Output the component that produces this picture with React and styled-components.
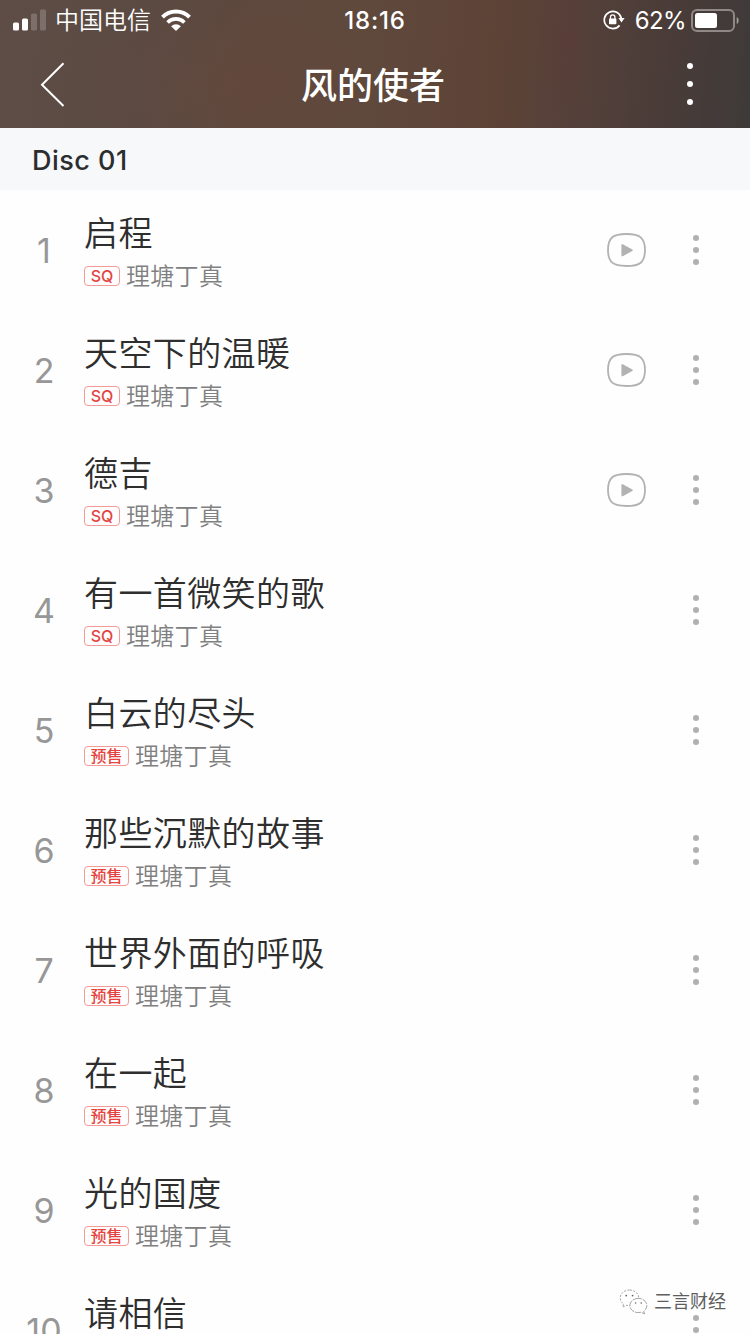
import React from 'react';
import styled, { createGlobalStyle } from 'styled-components';

const GlobalStyle = createGlobalStyle`
  * {
    box-sizing: border-box;
  }
  body {
    margin: 0;
    background: #ffffff;
    font-family: Inter, "Noto Sans CJK SC", sans-serif;
  }
  svg {
    display: block;
    flex-shrink: 0;
  }
`;

const Screen = styled.main`
  position: relative;
  width: 750px;
  height: 1334px;
  overflow: hidden;
  background: #fefefe;
`;
const Header = styled.header`
  height: 128px;
  color: #ffffff;
  background:
    radial-gradient(ellipse 150px 80px at 225px 84px, rgba(112, 70, 56, 0.18), transparent),
    radial-gradient(ellipse 30px 90px at 568px 40px, rgba(100, 50, 46, 0.18), transparent),
    linear-gradient(95deg, #5d4d46 0%, #5b4a42 20%, #5f483d 34%, #5f483c 50%, #5d4336 66%, #54403a 77%, #4a3c38 88%, #3e3a39 100%);
`;
const StatusBar = styled.div`
  display: grid;
  grid-template-columns: 1fr auto 1fr;
  align-items: center;
  height: 40px;
`;
const StatusLeft = styled.div`
  display: flex;
  align-items: center;
  padding-left: 13px;
`;
const StatusRight = styled.div`
  display: flex;
  align-items: center;
  justify-content: flex-end;
  padding-right: 11px;
`;
const Carrier = styled.span`
  margin: 0 10px 0 9px;
  padding-top: 2px;
  font-weight: 350;
  font-size: 24px;
  line-height: 36px;
`;
const Clock = styled.span`
  padding-top: 2px;
  font-weight: 500;
  font-size: 24px;
  line-height: 36px;
  letter-spacing: 0.8px;
`;
const Percent = styled.span`
  margin: 0 5px 0 10px;
  padding-top: 2px;
  font-size: 24px;
  line-height: 36px;
  letter-spacing: -0.6px;
`;
const NavBar = styled.nav`
  display: flex;
  align-items: center;
  justify-content: space-between;
  height: 88px;
  padding: 0 57px 0 40px;
`;
const AlbumTitle = styled.h1`
  margin: 0 0 0 13px;
  padding-top: 4px;
  font-weight: 500;
  font-size: 36px;
  line-height: 52px;
`;
const NavButton = styled.button`
  display: flex;
  justify-content: ${({ $end }) => ($end ? 'flex-end' : 'flex-start')};
  width: 30px;
  padding: 0;
  border: 0;
  background: none;
  color: inherit;
`;
const DiscBar = styled.h2`
  height: 62px;
  margin: 0;
  padding-left: 32px;
  background: #f6f8fa;
  color: #2c2d2f;
  font-weight: 450;
  font-size: 27px;
  line-height: 65px;
  letter-spacing: 0.5px;
`;
const TrackList = styled.ol`
  margin: 0;
  padding: 0;
  list-style: none;
`;
const TrackRow = styled.li`
  display: grid;
  grid-template-columns: 80px 1fr auto 6px;
  align-items: center;
  height: 120px;
  padding: 0 51px 0 4px;
`;
const TrackNumber = styled.span`
  padding-top: 1px;
  color: #979797;
  font-size: 34px;
  line-height: 40px;
  text-align: center;
`;
const TrackInfo = styled.div`
  display: flex;
  flex-direction: column;
  padding-top: 2px;
`;
const TrackName = styled.h3`
  margin: 0;
  color: #2e2e2e;
  font-weight: 350;
  font-size: 34px;
  line-height: 50px;
  letter-spacing: 0.4px;
`;
const TrackMeta = styled.div`
  display: flex;
  align-items: center;
  gap: 6px;
  height: 34px;
`;
const Tag = styled.span`
  display: flex;
  align-items: center;
  justify-content: center;
  width: ${({ $wide }) => ($wide ? '45px' : '36px')};
  height: 20px;
  border: 1px solid #f49a97;
  border-radius: 4px;
  color: #e5433f;
  font-weight: 500;
  font-size: 16px;
  line-height: 18px;
`;
const Artist = styled.span`
  padding-top: 2px;
  color: #808080;
  font-weight: 350;
  font-size: 24px;
  line-height: 36px;
  letter-spacing: 0.3px;
`;
const PlayButton = styled.button`
  display: block;
  margin: 0 47px 1px 0;
  padding: 0;
  border: 0;
  background: none;
`;
const Watermark = styled.div`
  position: absolute;
  left: 619px;
  top: 1286px;
  display: flex;
  align-items: center;
  gap: 6px;
  color: #5e5e5e;
  font-size: 18px;
  line-height: 32px;
  text-shadow: -1px -1px 0 #ffffff;
`;

const tracks = [
  { name: '启程', tag: 'SQ', video: true },
  { name: '天空下的温暖', tag: 'SQ', video: true },
  { name: '德吉', tag: 'SQ', video: true },
  { name: '有一首微笑的歌', tag: 'SQ' },
  { name: '白云的尽头', tag: '预售' },
  { name: '那些沉默的故事', tag: '预售' },
  { name: '世界外面的呼吸', tag: '预售' },
  { name: '在一起', tag: '预售' },
  { name: '光的国度', tag: '预售' },
  { name: '请相信', tag: '预售' },
];

const SignalIcon = () => (
  <svg width="33" height="22" viewBox="0 0 33 22" fill="#fff">
    <rect x="0" y="13.5" width="6" height="8" rx="1.5" />
    <rect x="9" y="9.5" width="6" height="12" rx="1.5" />
    <rect x="18" y="4.5" width="6" height="17" rx="1.5" opacity=".2" />
    <rect x="27" y="0.5" width="6" height="21" rx="1.5" opacity=".2" />
  </svg>
);

const WifiIcon = () => (
  <svg width="30" height="22" viewBox="0 0 30 22" fill="none" stroke="#fff">
    <path d="M1.5 8.1a19.1 19.1 0 0 1 27 0" strokeWidth="4" />
    <path d="M6.6 13.4a11.8 11.8 0 0 1 16.8 0" strokeWidth="3.6" />
    <path d="M15 22l-4.9-4.8a7 7 0 0 1 9.8 0z" fill="#fff" stroke="none" />
  </svg>
);

const RotationLockIcon = () => (
  <svg width="22" height="20" viewBox="0 0 22 20" fill="none">
    <path d="M18.3 8.2A8.6 8.6 0 1 0 16.6 15.4" stroke="#fff" strokeWidth="1.7" />
    <path d="M15.4 8h6.2l-3.1 4.4z" fill="#fff" />
    <rect x="6" y="8.6" width="7.4" height="5.7" rx=".8" fill="#fff" />
    <path d="M7.5 9V7a2.2 2.2 0 0 1 4.4 0v2" stroke="#fff" strokeWidth="1.3" />
  </svg>
);

const BatteryIcon = () => (
  <svg width="48" height="23" viewBox="0 0 48 23">
    <rect x="1" y="1" width="42" height="21" rx="5" fill="none" stroke="#fff" strokeWidth="2" opacity=".4" />
    <rect x="4" y="4" width="22" height="15" rx="2.5" fill="#fff" />
    <path d="M45.7 8v7q2-.8 2-3.5T45.7 8z" fill="#fff" opacity=".5" />
  </svg>
);

const BackIcon = () => (
  <svg width="25" height="45" viewBox="0 0 25 45" fill="none" stroke="#fff" strokeWidth="2">
    <path d="M23.5 1.3L2 22.8 23.5 44" />
  </svg>
);

const DotsIcon = ({ size, gap, color }) => (
  <svg width={size} height={size + gap * 2} fill={color}>
    {[0, 1, 2].map((i) => (
      <circle key={i} cx={size / 2} cy={size / 2 + gap * i} r={size / 2} />
    ))}
  </svg>
);

const VideoIcon = () => (
  <svg width="39" height="34" viewBox="0 0 39 34" fill="none">
    <path
      d="M19.5 1C26.5 1 30.6 1.5 33.7 4.3 36.8 7 38 11 38 17s-1.2 10-4.3 12.7C30.6 32.5 26.5 33 19.5 33S8.4 32.5 5.3 29.7C2.2 27 1 23 1 17S2.2 7 5.3 4.3C8.4 1.5 12.5 1 19.5 1z"
      stroke="#b2b2b2"
      strokeWidth="1.8"
    />
    <path d="M15.3 12v10.4l9.6-5.2z" fill="#b2b2b2" stroke="#b2b2b2" strokeWidth="1.8" strokeLinejoin="round" />
  </svg>
);

const WechatIcon = () => (
  <svg width="29" height="26" viewBox="0 0 29 26" fill="#fff" stroke="#8a8a8a" strokeWidth=".8">
    <path
      d="M10.5 1C5.3 1 1.2 4.5 1.2 8.9c0 2.5 1.3 4.7 3.4 6.1l-1 3.2 3.6-2c1 .3 2.2.5 3.3.5 5.2 0 9.3-3.5 9.3-7.8S15.7 1 10.5 1z"
      strokeDasharray="2 1.5"
    />
    <path
      d="M19.3 9.4c-4.7 0-8.4 3.2-8.4 7.1s3.7 7.1 8.4 7.1c1 0 2-.2 2.9-.4l3.3 1.7-.8-2.8c1.9-1.3 3.1-3.3 3.1-5.6 0-3.9-3.8-7.1-8.5-7.1z"
      strokeDasharray="6 1"
    />
    <g fill="#666" stroke="none">
      <circle cx="7.2" cy="6.6" r=".9" />
      <circle cx="13.6" cy="6.6" r=".9" />
      <circle cx="16.6" cy="14" r=".8" />
      <circle cx="22.2" cy="14" r=".8" />
    </g>
  </svg>
);

const Track = ({ number, name, tag, video }) => (
  <TrackRow>
    <TrackNumber>{number}</TrackNumber>
    <TrackInfo>
      <TrackName>{name}</TrackName>
      <TrackMeta>
        <Tag $wide={tag !== 'SQ'}>{tag}</Tag>
        <Artist>理塘丁真</Artist>
      </TrackMeta>
    </TrackInfo>
    <div>{video && <PlayButton aria-label="MV"><VideoIcon /></PlayButton>}</div>
    <DotsIcon size={6} gap={12} color="#b0b0b0" />
  </TrackRow>
);

const App = () => {
  return (
    <Screen>
      <GlobalStyle />
      <Header>
        <StatusBar>
          <StatusLeft>
            <SignalIcon />
            <Carrier>中国电信</Carrier>
            <WifiIcon />
          </StatusLeft>
          <Clock>18:16</Clock>
          <StatusRight>
            <RotationLockIcon />
            <Percent>62%</Percent>
            <BatteryIcon />
          </StatusRight>
        </StatusBar>
        <NavBar>
          <NavButton><BackIcon /></NavButton>
          <AlbumTitle>风的使者</AlbumTitle>
          <NavButton $end><DotsIcon size={6} gap={18} color="#fff" /></NavButton>
        </NavBar>
      </Header>
      <DiscBar>Disc 01</DiscBar>
      <TrackList>
        {tracks.map((track, i) => (
          <Track key={track.name} number={i + 1} {...track} />
        ))}
      </TrackList>
      <Watermark>
        <WechatIcon />
        <span>三言财经</span>
      </Watermark>
    </Screen>
  );
};

export default App;
